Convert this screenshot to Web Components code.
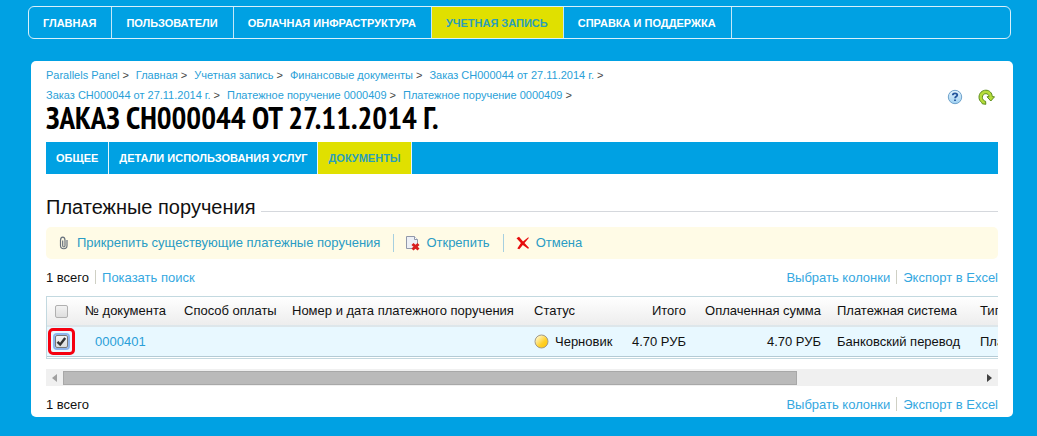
<!DOCTYPE html>
<html lang="ru">
<head>
<meta charset="utf-8">
<title>Заказ CH000044 от 27.11.2014 г.</title>
<style>
  html { background: #00a1e3; }
  body {
    margin: 0;
    padding: 6px 24px 18px 28px;
    font: 13px/20px "Liberation Sans", Arial, sans-serif;
    color: #111;
    --blue: #00a1e3;
    --link: #2a9fd8;
    --accent: #e0e000;
    --line: #c3d9e0;
  }
</style>
</head>
<body>
<panel-app></panel-app>

<script>
const define = (name, html, setup) => {
  const template = document.createElement('template');
  template.innerHTML = html;
  customElements.define(name, class extends HTMLElement {
    constructor() {
      super();
      this.attachShadow({ mode: 'open' }).append(template.content.cloneNode(true));
    }
    connectedCallback() { if (setup) setup(this, this.shadowRoot); }
  });
};

/* A link that inherits its font and is coloured by --link-color */
define('ui-link', `
  <style>
    :host { display: inline-block; }
    a { color: var(--link-color, var(--link)); text-decoration: none; }
    a:hover { text-decoration: underline; }
  </style>
  <a href="#"><slot></slot></a>`);

/* Top navigation */
define('main-nav', `
  <style>
    :host { display: block; margin-right: 2px; }
    nav { display: flex; height: 31px; border: 1px solid #d9f0fb; border-radius: 6px; overflow: hidden; }
  </style>
  <nav aria-label="Главное меню"><slot></slot></nav>`);

define('nav-item', `
  <style>
    :host { display: flex; border-right: 1px solid #c4e8f8; font-weight: bold; font-size: 11px; }
    a { display: flex; align-items: center; padding: 0 15px 0 14px; color: #fff; text-decoration: none; white-space: nowrap; }
    :host([active]) a { background: var(--accent); color: #2b9fb8; }
  </style>
  <a href="#"><slot></slot></a>`);

/* Tabs inside the panel */
define('tab-bar', `
  <style>
    :host { display: block; margin-top: 11px; }
    nav { display: flex; height: 32px; background: var(--blue); }
  </style>
  <nav aria-label="Разделы"><slot></slot></nav>`);

define('tab-item', `
  <style>
    :host { display: flex; border-right: 1px solid #e6f6fc; font-weight: bold; font-size: 11px; }
    a { display: flex; align-items: center; padding: 0 10px; color: #fff; text-decoration: none; white-space: nowrap; }
    :host([active]) a { background: var(--accent); color: #2b9fb8; }
  </style>
  <a href="#"><slot></slot></a>`);

define('content-panel', `
  <style>
    :host { display: block; margin: 22px 0 0 3px; padding: 4px 15px 2px; background: #fff; border-radius: 5px; }
  </style>
  <slot></slot>`);

define('bread-crumbs', `
  <style>
    :host { display: block; flex: 1; font-size: 11px; color: #444; white-space: nowrap; }
    div { display: flex; gap: 7px; }
  </style>
  <div><slot name="first"></slot></div>
  <div><slot name="second"></slot></div>`);

define('crumb-link', `
  <style>:host { display: block; }</style>
  <ui-link><slot></slot></ui-link> &gt;`);

define('page-head', `
  <style>
    :host { display: flex; justify-content: space-between; align-items: flex-end; }
    .tools { display: flex; gap: 14px; padding: 0 3px 0 0; }
    button { border: 0; padding: 0; background: none; width: 17px; height: 16px; }
    svg { display: block; }
  </style>
  <slot></slot>
  <div class="tools">
    <button type="button" aria-label="Справка">
      <svg width="16" height="16" viewBox="0 0 16 16">
        <defs><linearGradient id="h" x1="0" y1="0" x2="0" y2="1"><stop offset="0" stop-color="#e3f3fc"/><stop offset="1" stop-color="#9fd0f2"/></linearGradient></defs>
        <circle cx="8" cy="8" r="6.7" fill="url(#h)" stroke="#6fa3cc"/>
        <path d="M5.8 6.3C5.8 4.9 6.7 4.4 8 4.4s2.3.6 2.3 1.7c0 1.5-2.2 1.5-2.2 3.1M8 10.4v1.7" fill="none" stroke="#23559c" stroke-width="1.8"/>
      </svg>
    </button>
    <button type="button" aria-label="Обновить">
      <svg width="17" height="16" viewBox="0 0 17 16">
        <path d="M4.300 14.800 7.800 15.300 7.600 12.300C5.500 11.800 4.400 10.300 4.400 8.300 4.400 6.200 5.900 4.700 7.900 4.700 9.700 4.700 10.900 5.900 11 7.600L9 7.800 12.800 12 16.500 7.800 14.300 7.600C14.100 3.900 11.500 1.200 7.900 1.200 4 1.200 1 4.200 1 8.200 1 10.500 2 12.300 3.700 13.500z" fill="#b5dc3a" stroke="#5c8c1c" stroke-linejoin="round"/>
      </svg>
    </button>
  </div>`);

define('page-title', `
  <style>
    :host { display: block; }
    h1 { margin: 0; font: bold 31px/26px "PT Sans Narrow", "Liberation Sans", sans-serif; color: #000; text-transform: uppercase; white-space: nowrap; }
  </style>
  <h1><slot></slot></h1>`);

define('section-title', `
  <style>
    :host { display: flex; align-items: center; gap: 6px; margin-top: 21px; }
    h2 { margin: 0; font-weight: normal; font-size: 20px; line-height: 24px; color: #111; }
    i { flex: 1; height: 1px; margin-top: 8px; background: #d5d8dd; }
  </style>
  <h2><slot></slot></h2><i></i>`);

define('action-bar', `
  <style>
    :host { display: flex; align-items: center; height: 32px; margin-top: 8px; padding: 0 10px; background: #fffbe6; border-radius: 5px; }
  </style>
  <slot></slot>`);

define('action-button', `
  <style>
    :host { display: flex; padding-right: 13px; }
    :host(:not(:last-child)) { border-right: 1px solid #a6cfe0; margin-right: 11px; }
    button { display: flex; align-items: center; gap: 5px; height: 18px; padding: 0; border: 0; background: none; font: inherit; color: #2a9cc4; white-space: nowrap; }
    span { display: block; width: 16px; height: 16px; }
  </style>
  <button type="button"><span><slot name="icon"></slot></span><slot></slot></button>`);

/* Row count on the left, list commands on the right */
define('list-summary', `
  <style>
    :host { display: flex; justify-content: space-between; --link-color: #35a8df; }
    i { display: inline-block; width: 1px; height: 14px; margin: 0 6px; background: #cfd0c4; vertical-align: -2px; }
    .find { display: none; }
    :host([searchable]) .find { display: inline; }
  </style>
  <div><slot></slot><span class="find"><i></i><ui-link>Показать поиск</ui-link></span></div>
  <div><ui-link>Выбрать колонки</ui-link><i></i><ui-link>Экспорт в Excel</ui-link></div>`);

define('check-box', `
  <style>
    :host { display: block; width: 13px; height: 13px; position: relative; }
    input { appearance: none; display: block; box-sizing: border-box; width: 13px; height: 13px; margin: 0; border: 1px solid #b0b0b0; border-radius: 2px; background: linear-gradient(#f2f2f2, #dedede); }
    svg { position: absolute; left: 1px; top: 1px; display: none; pointer-events: none; }
    :host([checked]) input { border-color: #777; box-shadow: 0 0 0 2px #8fb4ec; }
    :host([checked]) svg { display: block; }
    :host([checked])::after { content: ""; position: absolute; inset: -7px; border: 3px solid #f5000f; border-radius: 5px; pointer-events: none; }
  </style>
  <input type="checkbox">
  <svg width="11" height="11" viewBox="0 0 11 11"><path d="M1.500 5.800l2.700 2.700L9.200 2" fill="none" stroke="#333" stroke-width="2.400"/></svg>`,
  (host, root) => {
    const box = root.querySelector('input');
    box.checked = host.hasAttribute('checked');
    box.setAttribute('aria-label', host.getAttribute('label'));
  });

define('data-grid', `
  <style>
    :host { display: block; margin-top: 8px; overflow: hidden; border-left: 1px solid var(--line); }
    table { table-layout: fixed; width: 1194px; border-collapse: separate; border-spacing: 0; border-top: 1px solid var(--line); border-bottom: 1px solid var(--line); }
    th, td { box-sizing: border-box; height: 30px; padding: 0 8px; font-weight: normal; text-align: left; white-space: nowrap; }
    th { background: linear-gradient(#fff, #ededed); border-bottom: 2px solid #dde6ea; }
    td { background: #e8f8ff; border-bottom: 1px solid #b4cbd5; }
    tbody::after { content: ""; display: table-row; height: 1px; }
    .num { text-align: right; }
    .id { padding-left: 18px; }
    .state { display: flex; align-items: center; gap: 6px; }
    .state svg { flex: none; }
  </style>
  <table>
    <colgroup>
      <col style="width:30px"><col style="width:99px"><col style="width:108px"><col style="width:242px">
      <col style="width:95px"><col style="width:73px"><col style="width:135px"><col style="width:143px"><col>
    </colgroup>
    <thead><tr>
      <th><check-box label="Выбрать все"></check-box></th>
      <th>№ документа</th><th>Способ оплаты</th><th>Номер и дата платежного поручения</th><th>Статус</th>
      <th class="num">Итого</th><th class="num">Оплаченная сумма</th><th>Платежная система</th><th>Тип</th>
    </tr></thead>
    <tbody><tr>
      <td><check-box checked label="Выбрать 0000401"></check-box></td>
      <td class="id"><ui-link>0000401</ui-link></td><td></td><td></td>
      <td><span class="state"><svg width="15" height="15" viewBox="0 0 15 15">
        <defs><linearGradient id="s" x1="0" y1="0" x2="1" y2="1"><stop offset=".15" stop-color="#fff6c8"/><stop offset=".6" stop-color="#ffd028"/><stop offset="1" stop-color="#ffc400"/></linearGradient></defs>
        <circle cx="7.500" cy="7.500" r="6.500" fill="url(#s)" stroke="#a39a86"/></svg>Черновик</span></td>
      <td class="num">4.70 РУБ</td><td class="num">4.70 РУБ</td><td>Банковский перевод</td><td>Платеж</td>
    </tr></tbody>
  </table>`);

define('scroll-track', `
  <style>
    :host { display: flex; align-items: center; height: 17px; margin: 10px 0 9px; background: #f0f0f0; }
    button { flex: none; display: grid; place-items: center; width: 17px; height: 17px; padding: 0; border: 0; background: none; }
    div { flex: 1; }
    b { display: block; box-sizing: border-box; width: 80%; height: 14px; background: #bababa; border: 1px solid #a8a8a8; }
  </style>
  <button type="button" aria-label="Влево"><svg width="5" height="8" viewBox="0 0 5 8"><path d="M5 0v8L0 4z" fill="#a0a0a0"/></svg></button>
  <div><b></b></div>
  <button type="button" aria-label="Вправо"><svg width="5" height="8" viewBox="0 0 5 8"><path d="M0 0v8l5-4z" fill="#404040"/></svg></button>`);

define('panel-app', `
  <style>
    :host { display: block; }
    .summary { margin-top: 9px; }
    svg { display: block; }
  </style>
  <main-nav>
    <nav-item>ГЛАВНАЯ</nav-item>
    <nav-item>ПОЛЬЗОВАТЕЛИ</nav-item>
    <nav-item>ОБЛАЧНАЯ ИНФРАСТРУКТУРА</nav-item>
    <nav-item active>УЧЕТНАЯ ЗАПИСЬ</nav-item>
    <nav-item>СПРАВКА И ПОДДЕРЖКА</nav-item>
  </main-nav>
  <content-panel>
    <page-head>
      <bread-crumbs>
        <crumb-link slot="first">Parallels Panel</crumb-link>
        <crumb-link slot="first">Главная</crumb-link>
        <crumb-link slot="first">Учетная запись</crumb-link>
        <crumb-link slot="first">Финансовые документы</crumb-link>
        <crumb-link slot="first">Заказ CH000044 от 27.11.2014 г.</crumb-link>
        <crumb-link slot="second">Заказ CH000044 от 27.11.2014 г.</crumb-link>
        <crumb-link slot="second">Платежное поручение 0000409</crumb-link>
        <crumb-link slot="second">Платежное поручение 0000409</crumb-link>
      </bread-crumbs>
    </page-head>
    <page-title>Заказ CH000044 от 27.11.2014 г.</page-title>
    <tab-bar>
      <tab-item>ОБЩЕЕ</tab-item>
      <tab-item>ДЕТАЛИ ИСПОЛЬЗОВАНИЯ УСЛУГ</tab-item>
      <tab-item active>ДОКУМЕНТЫ</tab-item>
    </tab-bar>
    <section-title>Платежные поручения</section-title>
    <action-bar>
      <action-button>
        <svg slot="icon" width="16" height="16" viewBox="0 0 16 16"><path d="M4.500 5v5.500c0 4.300 6.500 4.300 6.500 0V5M4.500 5.500c0-4.500 4.500-4.500 4.500 0v5c0 2-2.300 2-2.300 0V5.500" fill="none" stroke="#68717c" stroke-width="1.200"/></svg>
        Прикрепить существующие платежные поручения
      </action-button>
      <action-button>
        <svg slot="icon" width="16" height="16" viewBox="0 0 16 16"><path d="M1.500 1.500h8l3 3v9h-11z" fill="#edf0f6" stroke="#9198aa"/><path d="M9.500 1.500v3h3" fill="#fff" stroke="#9198aa"/><path d="M7.500 9l6 5.500M13.500 9l-6 5.500" stroke="#d81e1e" stroke-width="3"/></svg>
        Открепить
      </action-button>
      <action-button>
        <svg slot="icon" width="16" height="16" viewBox="0 0 16 16"><path d="M1.500 3.200L4 1.800 8 6.500 13.300 2.300l.5.700L9.500 8l4.600 5-1.100.8L7.800 9.900 4.300 14.300l-2-.8L5.900 8z" fill="#e60c0c"/></svg>
        Отмена
      </action-button>
    </action-bar>
    <list-summary class="summary" searchable>1 всего</list-summary>
    <data-grid></data-grid>
    <scroll-track></scroll-track>
    <list-summary>1 всего</list-summary>
  </content-panel>`);
</script>
</body>
</html>
